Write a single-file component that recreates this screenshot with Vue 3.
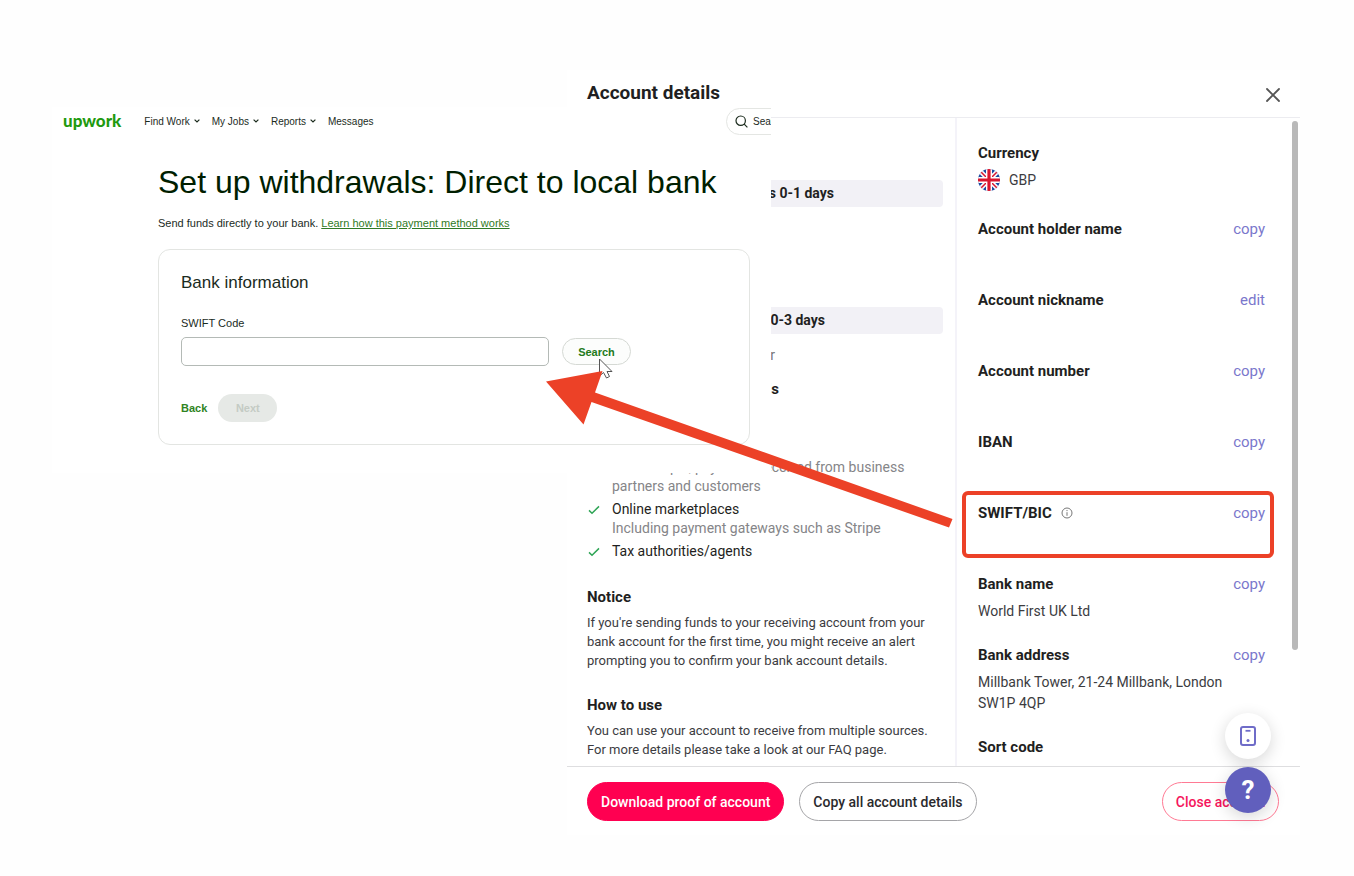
<template>
  <main class="stage">
    <section class="account">
      <header class="account-header">
        <h2 class="account-title">Account details</h2>
        <button type="button" class="close-button" aria-label="Close">
          <svg width="16" height="16" viewBox="0 0 16 16">
            <path d="M2 2l12 12M14 2L2 14" fill="none" stroke="#555" stroke-width="1.8" stroke-linecap="round" />
          </svg>
        </button>
      </header>

      <div class="account-body">
        <div class="info">
          <p class="duration">takes 0-1 days</p>
          <p class="duration">takes 0-3 days</p>
          <p class="covered-line">transfer</p>
          <h3 class="covered-heading">funds</h3>
          <ul class="sources">
            <li v-for="source in sources" :key="source.title" class="source">
              <svg class="check" width="12" height="10" viewBox="0 0 12 10">
                <path d="M1 5.4L4 8.2L11 1.4" fill="none" stroke="#2fa556" stroke-width="1.5" />
              </svg>
              <div>
                <p class="source-title">{{ source.title }}</p>
                <p v-if="source.note" class="source-note">{{ source.note }}</p>
              </div>
            </li>
          </ul>
          <h3 class="info-heading">Notice</h3>
          <p class="info-text">
            If you're sending funds to your receiving account from your<br />
            bank account for the first time, you might receive an alert<br />
            prompting you to confirm your bank account details.
          </p>
          <h3 class="info-heading">How to use</h3>
          <p class="info-text">
            You can use your account to receive from multiple sources.<br />
            For more details please take a look at our FAQ page.
          </p>
        </div>

        <div class="fields">
          <div class="field currency">
            <div class="field-head"><h3>Currency</h3></div>
            <div class="currency-value">
              <svg width="22" height="22" viewBox="0 0 22 22">
                <defs>
                  <clipPath id="flag"><circle cx="11" cy="11" r="11" /></clipPath>
                </defs>
                <g clip-path="url(#flag)">
                  <path d="M0 0h22v22H0z" fill="#1c4aa0" />
                  <path d="M0 0L22 22M22 0L0 22" stroke="#fff" stroke-width="4.6" />
                  <path d="M0 0L22 22M22 0L0 22" stroke="#d8152f" stroke-width="1.5" />
                  <path d="M11 0v22M0 11h22" stroke="#fff" stroke-width="6" />
                  <path d="M11 0v22M0 11h22" stroke="#d8152f" stroke-width="3.2" />
                </g>
              </svg>
              <span>GBP</span>
            </div>
          </div>
          <div v-for="field in fields" :key="field.label" class="field">
            <div class="field-head">
              <h3>{{ field.label }}</h3>
              <svg v-if="field.info" class="info-icon" width="12" height="12" viewBox="0 0 12 12">
                <circle cx="6" cy="6" r="5" fill="none" stroke="#777" />
                <path d="M6 5.2v3.6M6 3v1.1" stroke="#777" />
              </svg>
              <button v-if="field.action" type="button" class="field-action">{{ field.action }}</button>
            </div>
            <p v-if="field.value" class="field-value">{{ field.value }}</p>
            <div v-if="field.info" class="highlight"></div>
          </div>
          <div class="scroll-thumb"></div>
        </div>
      </div>

      <footer class="account-footer">
        <button type="button" class="pill-button primary">Download proof of account</button>
        <button type="button" class="pill-button">Copy all account details</button>
        <button type="button" class="pill-button danger">Close account</button>
      </footer>

      <div class="floating">
        <button type="button" class="round-button" aria-label="Mobile app">
          <svg width="18" height="20" viewBox="0 0 18 20">
            <rect x="2" y="1" width="14" height="18" rx="2" fill="none" stroke="#6f6cc8" stroke-width="2" />
            <path d="M6.5 4.8h5" stroke="#6f6cc8" stroke-width="1.8" />
            <circle cx="9" cy="14.5" r="1.5" fill="#6f6cc8" />
          </svg>
        </button>
        <button type="button" class="round-button help">?</button>
      </div>
    </section>

    <section class="upwork">
      <nav class="nav">
        <a href="#" class="logo">upwork</a>
        <a v-for="link in links" :key="link.name" href="#" class="nav-link">
          {{ link.name }}
          <svg v-if="link.menu" width="6" height="4" viewBox="0 0 6 4">
            <path d="M.6.6L3 3L5.4.6" fill="none" stroke="#1b2b1d" stroke-width="1.2" />
          </svg>
        </a>
        <button type="button" class="nav-search">
          <svg width="13" height="13" viewBox="0 0 13 13">
            <circle cx="5.7" cy="5.7" r="4.7" fill="none" stroke="#1b2b1d" stroke-width="1.2" />
            <path d="M9.2 9.2L12.4 12.4" stroke="#1b2b1d" stroke-width="1.2" />
          </svg>
          <span>Search</span>
        </button>
      </nav>

      <div class="setup">
        <h1 class="setup-title">Set up withdrawals: Direct to local bank</h1>
        <p class="setup-text">
          Send funds directly to your bank.
          <a href="#" class="setup-link">Learn how this payment method works</a>
        </p>
        <form class="card" @submit.prevent>
          <h2 class="card-title">Bank information</h2>
          <label for="swift" class="card-label">SWIFT Code</label>
          <div class="search-row">
            <input id="swift" v-model="swift" type="text" class="swift-input" />
            <button type="submit" class="search-button">Search</button>
          </div>
          <div class="card-actions">
            <button type="button" class="back-button">Back</button>
            <button type="button" class="next-button" disabled>Next</button>
          </div>
        </form>
      </div>
    </section>

    <!-- cursor and pointer arrow -->
    <svg class="overlay" viewBox="0 0 1354 876" preserveAspectRatio="none">
      <path d="M599.5 359v17l4-3.5l3 5.5l3-1.5l-2.5-5h5z" fill="#fff" stroke="#555" stroke-width="1" />
      <path d="M546 381.5L602.5 371L595 392.5L952.5 519L949 527.5L591.5 402L583.5 424.5z" fill="#ec4127" />
    </svg>
  </main>
</template>

<script setup>
import { ref } from 'vue'

const swift = ref('')

const links = [
  { name: 'Find Work', menu: true },
  { name: 'My Jobs', menu: true },
  { name: 'Reports', menu: true },
  { name: 'Messages', menu: false },
]

const sources = [
  {
    title: 'Business partners',
    note: 'For example, payments received from business partners and customers',
  },
  { title: 'Online marketplaces', note: 'Including payment gateways such as Stripe' },
  { title: 'Tax authorities/agents' },
]

const fields = [
  { label: 'Account holder name', action: 'copy' },
  { label: 'Account nickname', action: 'edit' },
  { label: 'Account number', action: 'copy' },
  { label: 'IBAN', action: 'copy' },
  { label: 'SWIFT/BIC', action: 'copy', info: true },
  { label: 'Bank name', action: 'copy', value: 'World First UK Ltd' },
  { label: 'Bank address', action: 'copy', value: 'Millbank Tower, 21-24 Millbank, London SW1P 4QP' },
  { label: 'Sort code' },
]
</script>

<style>
body {
  margin: 0;
  background: #fefefe;
}
</style>

<style scoped>
* {
  box-sizing: border-box;
}

h1,
h2,
h3,
p,
ul {
  margin: 0;
  padding: 0;
}

button {
  font-family: inherit;
  padding: 0;
  border: none;
  background: none;
  cursor: pointer;
}

.stage {
  position: relative;
  display: grid;
  grid-template-columns: 52px 515fr 204fr 529fr 54px;
  grid-template-rows: 70px 37px auto 1fr;
  align-items: start;
  min-height: 100vh;
}

/* account window */
.account {
  position: relative;
  grid-column: 3 / 5;
  grid-row: 2 / 5;
  background: #fff;
  color: #1f1f22;
  font-family: Roboto, sans-serif;
}

.account-header {
  display: flex;
  justify-content: space-between;
  align-items: center;
  height: 48px;
  padding: 0 19px 2px 20px;
  border-bottom: 1px solid #ececf0;
}

.account-title {
  font-size: 19px;
  line-height: 24px;
  font-weight: 700;
}

.close-button {
  display: flex;
  margin-top: 4px;
}

.account-body {
  display: grid;
  grid-template-columns: 390fr 343fr;
}

.info {
  padding: 62px 12px 7px 20px;
  border-right: 2px solid #f4f3f9;
}

.duration {
  height: 27px;
  margin-bottom: 100px;
  padding-right: 109px;
  border-radius: 4px;
  background: #f2f1f6;
  font-size: 14px;
  line-height: 27px;
  font-weight: 700;
  text-align: right;
}

.duration + .duration {
  margin-bottom: 12px;
  padding-right: 118px;
}

.covered-line {
  padding-right: 168px;
  color: #77777a;
  font-size: 14px;
  line-height: 19px;
  text-align: right;
}

.covered-heading {
  margin: 14px 0 40px;
  padding-right: 164px;
  font-size: 15px;
  line-height: 20px;
  font-weight: 700;
  text-align: right;
}

.sources {
  list-style: none;
}

.source {
  display: flex;
  gap: 12px;
  margin-bottom: 4px;
  padding-left: 1px;
  font-size: 14px;
  line-height: 19px;
}

.check {
  flex: none;
  margin-top: 5px;
}

.source-note {
  color: #858588;
}

.info-heading {
  margin-top: 26px;
  font-size: 15px;
  line-height: 20px;
  font-weight: 700;
}

.info-text {
  margin: 6px 0 22px;
  color: #3c3c3f;
  font-size: 13px;
  line-height: 19px;
}

.info-text:last-child {
  margin-bottom: 0;
}

.info-text + .info-heading {
  margin-top: 25px;
}

.fields {
  position: relative;
  padding: 25px 35px 0 21px;
}

.field {
  position: relative;
  min-height: 71px;
  padding-bottom: 23px;
}

.field.currency {
  min-height: 76px;
}

.field:nth-last-child(2) {
  min-height: 0;
  padding-bottom: 8px;
}

.field-head {
  display: flex;
  align-items: center;
  height: 20px;
}

.field-head h3 {
  font-size: 15px;
  line-height: 20px;
  font-weight: 700;
}

.info-icon {
  margin-left: 9px;
}

.field-action {
  margin-left: auto;
  color: #7a77cc;
  font-size: 15px;
  line-height: 20px;
}

.field-value {
  max-width: 250px;
  margin-top: 7px;
  color: #3c3c3f;
  font-size: 14px;
  line-height: 21px;
}

.currency-value {
  display: flex;
  align-items: center;
  gap: 9px;
  height: 24px;
  margin-top: 5px;
  color: #3c3c3f;
  font-size: 14px;
}

.highlight {
  position: absolute;
  top: -12px;
  left: -16px;
  right: -9px;
  height: 67px;
  border: 4px solid #ec4127;
  border-radius: 6px;
}

.scroll-thumb {
  position: absolute;
  top: 3px;
  right: 2px;
  width: 6px;
  height: 529px;
  border-radius: 3px;
  background: #b9b9b9;
}

.account-footer {
  display: flex;
  gap: 15px;
  padding: 15px 21px 14px 20px;
  border-top: 1px solid #dedee0;
}

.pill-button {
  height: 39px;
  padding: 0 13px;
  border: 1px solid #a5a5a8;
  border-radius: 20px;
  color: #2a2a2d;
  font-size: 14px;
  font-weight: 500;
}

.pill-button.primary {
  border-color: #ff0051;
  background: #ff0051;
  color: #fff;
}

.pill-button.danger {
  margin-left: auto;
  border-color: #ff7a94;
  color: #f5155c;
}

.floating {
  position: absolute;
  right: 29px;
  bottom: 22px;
  display: flex;
  flex-direction: column;
  gap: 8px;
}

.round-button {
  display: flex;
  justify-content: center;
  align-items: center;
  width: 46px;
  height: 46px;
  border-radius: 50%;
  background: #fff;
  box-shadow: 0 4px 16px rgba(0, 0, 0, 0.16);
}

.round-button.help {
  background: #615fbd;
  color: #fff;
  font-size: 26px;
  font-weight: 700;
}

/* upwork window */
.upwork {
  grid-column: 2 / 4;
  grid-row: 3;
  position: relative;
  overflow: hidden;
  padding-bottom: 28px;
  background: #fff;
  color: #1b2b1d;
  font-family: 'Liberation Sans', Arial, sans-serif;
}

.nav {
  display: flex;
  align-items: center;
  gap: 12px;
  height: 28px;
  padding-left: 11px;
}

.logo {
  margin-right: 11px;
  color: #1f9a0f;
  font-family: Lato, sans-serif;
  font-size: 17px;
  line-height: 20px;
  font-weight: 900;
  text-decoration: none;
}

.nav-link {
  display: flex;
  align-items: center;
  gap: 4px;
  color: #1b2b1d;
  font-size: 10px;
  text-decoration: none;
  white-space: nowrap;
}

.nav-search {
  display: flex;
  flex: none;
  align-items: center;
  gap: 5px;
  width: 120px;
  height: 27px;
  margin: 1px -75px 0 auto;
  padding-left: 8px;
  border: 1px solid #e4e6e3;
  border-radius: 14px;
  color: #1b2b1d;
  font-size: 10px;
}

.setup {
  padding: 26px 21px 0 106px;
}

.setup-title {
  color: #001e00;
  font-size: 32px;
  line-height: 42px;
  font-weight: 400;
  white-space: nowrap;
}

.setup-text {
  margin-top: 12px;
  font-size: 11px;
  line-height: 16px;
}

.setup-link {
  color: #2f7a25;
}

.card {
  margin-top: 18px;
  padding: 23px 22px 22px;
  border: 1px solid #e3e5e2;
  border-radius: 12px;
}

.card-title {
  font-size: 17px;
  line-height: 20px;
  font-weight: 400;
}

.card-label {
  display: block;
  margin: 22px 0 6px;
  font-size: 11px;
  line-height: 16px;
}

.search-row {
  display: flex;
  align-items: center;
  gap: 13px;
}

.swift-input {
  flex: 1;
  max-width: 368px;
  height: 29px;
  padding: 0 8px;
  border: 1px solid #b4bab6;
  border-radius: 5px;
  background: #fff;
  font-size: 12px;
}

.search-button {
  width: 69px;
  height: 27px;
  border: 1px solid #d5d9d4;
  border-radius: 14px;
  background: #fcfdfc;
  color: #237a1b;
  font-size: 11px;
  font-weight: 700;
}

.card-actions {
  display: flex;
  align-items: center;
  gap: 11px;
  margin-top: 28px;
}

.back-button {
  color: #2f8423;
  font-size: 11px;
  font-weight: 700;
}

.next-button {
  width: 59px;
  height: 28px;
  border-radius: 14px;
  background: #e6e9e6;
  color: #c4cbc4;
  font-size: 11px;
  font-weight: 700;
  cursor: default;
}

.overlay {
  position: absolute;
  top: 0;
  left: 0;
  width: 100%;
  height: 876px;
  pointer-events: none;
}
</style>
